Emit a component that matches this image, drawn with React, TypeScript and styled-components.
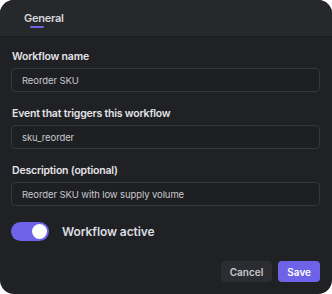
import React, { useState } from 'react';
import styled, { createGlobalStyle } from 'styled-components';

const GlobalStyle = createGlobalStyle`
  html, body {
    margin: 0;
    padding: 0;
    background: #ffffff;
  }
  * {
    box-sizing: border-box;
  }
`;

const Card = styled.div`
  width: 332px;
  height: 294px;
  background-color: #202125;
  border-radius: 14px;
  overflow: hidden;
  font-family: Inter, 'Noto Sans', sans-serif;
  display: flex;
  flex-direction: column;
`;

const TabBar = styled.div`
  height: 37px;
  background-color: #27282c;
  border-bottom: 1px solid #1b1c1f;
  display: flex;
  align-items: flex-end;
  padding-left: 24px;
`;

const Tab = styled.div`
  position: relative;
  height: 100%;
  display: flex;
  align-items: center;
  font-size: 11px;
  font-weight: 600;
  letter-spacing: -0.25px;
  color: #d8d8dc;
`;

const TabUnderline = styled.span`
  position: absolute;
  left: 6px;
  bottom: 8px;
  width: 14px;
  height: 2px;
  border-radius: 1px;
  background-color: #6f63e6;
`;

const Body = styled.div`
  flex: 1;
  display: flex;
  flex-direction: column;
  padding: 14px 12px 12px 11px;
`;

const Field = styled.div`
  display: flex;
  flex-direction: column;
  gap: 5px;
  margin-bottom: 16px;
`;

const Label = styled.label`
  font-size: 10.5px;
  font-weight: 600;
  letter-spacing: -0.2px;
  color: #e4e4e7;
  padding-left: 1px;
  line-height: 12px;
`;

const Input = styled.input`
  height: 24px;
  width: 100%;
  background-color: #1e1f23;
  border: 1px solid #36373c;
  border-radius: 4px;
  padding: 0 10px;
  font-family: inherit;
  font-size: 9.5px;
  letter-spacing: -0.1px;
  color: #c8c8cc;
  outline: none;
`;

const ToggleRow = styled.div`
  display: flex;
  align-items: center;
  gap: 13px;
`;

const Switch = styled.button<{ $on: boolean }>`
  width: 38px;
  height: 19px;
  border-radius: 10px;
  border: none;
  padding: 2px;
  background-color: ${({ $on }) => ($on ? '#6e62e8' : '#44454b')};
  display: flex;
  align-items: center;
  justify-content: ${({ $on }) => ($on ? 'flex-end' : 'flex-start')};
  cursor: pointer;
`;

const Knob = styled.span`
  width: 15px;
  height: 15px;
  border-radius: 50%;
  background-color: #ffffff;
`;

const ToggleText = styled.span`
  font-size: 12px;
  font-weight: 600;
  letter-spacing: -0.1px;
  color: #dcdce0;
`;

const Footer = styled.div`
  margin-top: auto;
  display: flex;
  justify-content: flex-end;
  gap: 6px;
`;

const Button = styled.button<{ $primary?: boolean }>`
  height: 21px;
  padding: 0 9px;
  border: none;
  border-radius: 4px;
  font-family: inherit;
  font-size: 10px;
  font-weight: 600;
  color: ${({ $primary }) => ($primary ? '#ffffff' : '#c8c8cc')};
  background-color: ${({ $primary }) => ($primary ? '#6e62e8' : '#2c2d32')};
  cursor: pointer;
`;

const App: React.FC = () => {
  const [active, setActive] = useState(true);

  return (
    <>
      <GlobalStyle />
      <Card>
        <TabBar>
          <Tab>
            General
            <TabUnderline />
          </Tab>
        </TabBar>
        <Body>
          <Field>
            <Label>Workflow name</Label>
            <Input defaultValue="Reorder SKU" />
          </Field>
          <Field>
            <Label>Event that triggers this workflow</Label>
            <Input defaultValue="sku_reorder" />
          </Field>
          <Field>
            <Label>Description (optional)</Label>
            <Input defaultValue="Reorder SKU with low supply volume" />
          </Field>
          <ToggleRow>
            <Switch $on={active} onClick={() => setActive(!active)}>
              <Knob />
            </Switch>
            <ToggleText>Workflow active</ToggleText>
          </ToggleRow>
          <Footer>
            <Button>Cancel</Button>
            <Button $primary>Save</Button>
          </Footer>
        </Body>
      </Card>
    </>
  );
};

export default App;
